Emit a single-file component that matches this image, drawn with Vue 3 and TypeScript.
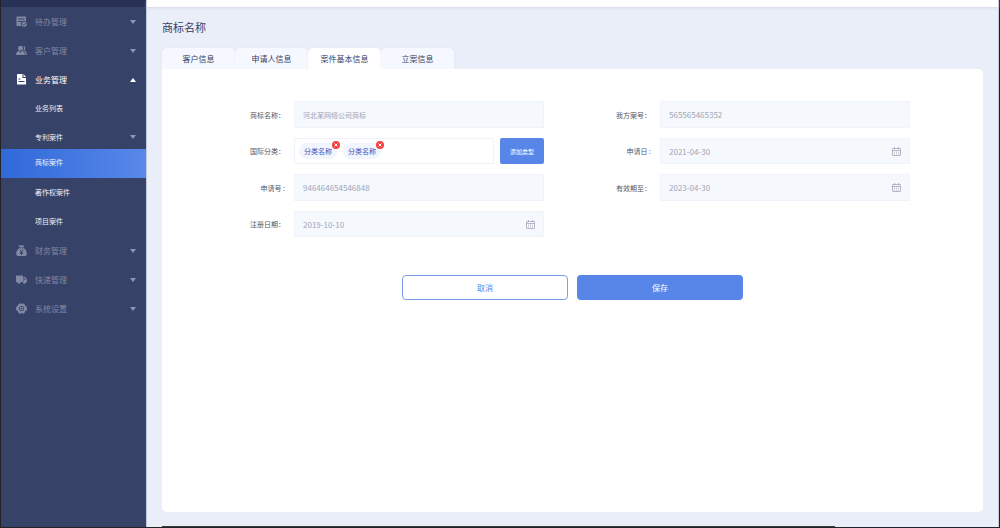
<script setup lang="ts">
import { ref } from 'vue'

interface MenuItem {
  label: string
  icon: string
  open?: boolean
}
interface SubItem {
  label: string
  active?: boolean
  arrow?: boolean
}
interface Field {
  id: string
  label: string
  value: string
  kind: 'text' | 'date' | 'tags'
}

const topMenu: MenuItem[] = [
  { label: '待办管理', icon: 'todo' },
  { label: '客户管理', icon: 'users' },
  { label: '业务管理', icon: 'file', open: true },
]
const subMenu: SubItem[] = [
  { label: '业务列表' },
  { label: '专利案件', arrow: true },
  { label: '商标案件', active: true },
  { label: '著作权案件' },
  { label: '项目案件' },
]
const bottomMenu: MenuItem[] = [
  { label: '财务管理', icon: 'money' },
  { label: '快递管理', icon: 'truck' },
  { label: '系统设置', icon: 'gear' },
]

const tabs = ['客户信息', '申请人信息', '案件基本信息', '立案信息']
const activeTab = ref(2)

const columns = ref<Field[][]>([
  [
    { id: 'name', label: '商标名称：', value: '河北某网络公司商标', kind: 'text' },
    { id: 'category', label: '国际分类：', value: '', kind: 'tags' },
    { id: 'apply-no', label: '申请号 :', value: '946464654546848', kind: 'text' },
    { id: 'reg-date', label: '注册日期：', value: '2019-10-10', kind: 'date' },
  ],
  [
    { id: 'our-no', label: '我方案号：', value: '565565465352', kind: 'text' },
    { id: 'apply-date', label: '申请日 :', value: '2021-04-30', kind: 'date' },
    { id: 'valid-date', label: '有效期至：', value: '2023-04-30', kind: 'date' },
  ],
])

const tags = ref<string[]>(['分类名称', '分类名称'])

function isNumeric(value: string): boolean {
  return /^[\d-]+$/.test(value)
}
</script>

<template>
  <div class="app">
    <aside class="sidebar">
      <div class="sidebar-top"></div>
      <nav>
        <template v-for="(group, g) in [topMenu, bottomMenu]" :key="g">
          <button
            v-for="item in group"
            :key="item.label"
            type="button"
            class="menu-item"
            :class="{ open: item.open }"
          >
            <svg class="menu-icon" viewBox="0 0 22 22" fill="currentColor" aria-hidden="true">
              <template v-if="item.icon === 'todo'">
                <path
                  fill-rule="evenodd"
                  d="M2 1h17a1 1 0 0 1 1 1v9.500a6 6 0 0 0-8.500 8.500H2a1 1 0 0 1-1-1V2a1 1 0 0 1 1-1zM4 5v2h13V5zM4 10v2h7v-2z"
                />
                <path
                  fill-rule="evenodd"
                  d="M16.500 11.500a5 5 0 1 1 0 10 5 5 0 0 1 0-10zM13.500 16.500l2.500 2.500 4-4-1-1-3 3-1.500-1.500z"
                />
              </template>
              <template v-else-if="item.icon === 'users'">
                <circle cx="9" cy="6.500" r="5" />
                <path d="M0 20c0-5 3-8 6-8l3 3 3-3c3 0 6 3 6 8z" />
                <path d="M14 1.500a5 5 0 0 1 2 9.500c3 .5 6 3.500 6 9h-2.500c0-4-2-7-5.500-9a6 6 0 0 0 0-9.500z" />
              </template>
              <path
                v-else-if="item.icon === 'file'"
                fill-rule="evenodd"
                d="M3 0h10v8h7v12a1 1 0 0 1-1 1H3a1 1 0 0 1-1-1V1a1 1 0 0 1 1-1zM15 0l5 6h-5zM5 9v2h4V9zM5 14v2h12v-2z"
              />
              <template v-else-if="item.icon === 'money'">
                <path d="M5 0l3 1.500L11 0l3 1.500L17 0l-2 5H7z" />
                <path
                  fill-rule="evenodd"
                  d="M6 6.500h10c4 3 5.500 7 5.500 11 0 3-1 4.500-4 4.500h-13c-3 0-4-1.500-4-4.500 0-4 1.500-8 5.500-11zM7 9.500l3 4H7.500V15H10v1.500H7.500V18H10v2h2v-2h2.500v-1.500H12V15h2.500v-1.500H12l3-4h-2l-2 3-2-3z"
                />
              </template>
              <template v-else-if="item.icon === 'truck'">
                <path d="M1 3h13v13H0V4a1 1 0 0 1 1-1z" />
                <path fill-rule="evenodd" d="M15 6h4l3 5v5h-7zM16.500 8v3h3.500l-2-3z" />
                <circle cx="6" cy="16.500" r="3" />
                <circle cx="17" cy="16.500" r="3" />
              </template>
              <path
                v-else
                fill-rule="evenodd"
                d="M6 1h3.500L11 2 12.500 1H16l2 3 .5 2.500H21l1 4.500-1 4.500h-2.500L18 18l-2 3h-3.500L11 20l-1.500 1H6l-2-3-.5-2.500H1L0 11l1-4.500h2.500L4 4zM11 6a5 5 0 1 0 0 10 5 5 0 0 0 0-10zM11 7.500a3.500 3.500 0 1 1 0 7 3.500 3.500 0 0 1 0-7zM11 9.500a1.500 1.500 0 1 0 0 3 1.500 1.500 0 0 0 0-3z"
              />
            </svg>
            <span>{{ item.label }}</span>
            <i class="arrow"></i>
          </button>
          <ul v-if="g === 0" class="submenu">
            <li v-for="sub in subMenu" :key="sub.label">
              <a href="#" class="sub-item" :class="{ active: sub.active, parent: sub.arrow }">
                <span>{{ sub.label }}</span>
                <i v-if="sub.arrow" class="arrow"></i>
              </a>
            </li>
          </ul>
        </template>
      </nav>
    </aside>

    <div class="page">
      <header class="topbar"></header>
      <main class="content">
        <h1>商标名称</h1>
        <div class="tabs" role="tablist">
          <button
            v-for="(tab, i) in tabs"
            :key="tab"
            type="button"
            role="tab"
            class="tab"
            :class="{ active: i === activeTab }"
            :aria-selected="i === activeTab"
            @click="activeTab = i"
          >
            {{ tab }}
          </button>
        </div>

        <form class="card" @submit.prevent>
          <div class="form-grid">
            <div v-for="(column, c) in columns" :key="c" class="form-column">
              <div v-for="field in column" :key="field.id" class="field">
                <label :for="field.id">{{ field.label }}</label>
                <div v-if="field.kind === 'tags'" class="tag-row">
                  <div class="tag-box">
                    <span v-for="(tag, t) in tags" :key="t" class="tag">
                      {{ tag }}
                      <button type="button" class="tag-close" aria-label="删除" @click="tags.splice(t, 1)">
                        <svg viewBox="0 0 8 8" aria-hidden="true">
                          <path d="M2.500 2.500l3 3m0-3l-3 3" stroke="#fff" stroke-width="1" />
                        </svg>
                      </button>
                    </span>
                    <input :id="field.id" v-model="field.value" class="tag-input" type="text" />
                  </div>
                  <button type="button" class="add">添加类型</button>
                </div>
                <div v-else class="control">
                  <input
                    :id="field.id"
                    v-model="field.value"
                    type="text"
                    :class="{ numeric: isNumeric(field.value) }"
                  />
                  <svg
                    v-if="field.kind === 'date'"
                    class="calendar"
                    viewBox="0 0 9 9"
                    fill="none"
                    stroke="currentColor"
                    aria-hidden="true"
                  >
                    <rect x="0.500" y="1.500" width="8" height="7" rx="0.500" stroke-width="0.800" />
                    <path d="M0.500 3.500h8" stroke-width="0.800" />
                    <path d="M2.500 0v2M6.500 0v2" stroke-width="0.800" />
                    <path d="M2 5.200h5M2 7h5" stroke-width="0.800" stroke-dasharray="1 1" />
                  </svg>
                </div>
              </div>
            </div>
          </div>
          <div class="actions">
            <button type="button" class="cancel">取消</button>
            <button type="submit" class="save">保存</button>
          </div>
        </form>
        <div class="strip"></div>
      </main>
    </div>
  </div>
</template>

<style>
body {
  margin: 0;
}
</style>

<style scoped>
.app,
.app * {
  box-sizing: border-box;
}

.app {
  display: flex;
  min-height: 100vh;
  border: solid #222327;
  border-width: 0 1px 1px;
  background: #eaeef8;
  font-family: 'Noto Sans CJK SC', 'Noto Sans', sans-serif;
  color: #364267;
}

button,
input {
  margin: 0;
  padding: 0;
  border: 0;
  background: none;
  font-family: inherit;
  color: inherit;
}

button {
  cursor: pointer;
}

.sidebar {
  flex: 0 0 145px;
  background: #364267;
}

.sidebar-top {
  height: 7px;
  background: #283256;
}

.menu-item {
  display: flex;
  align-items: center;
  width: 100%;
  height: 29px;
  padding: 0 10px 0 15px;
  font-size: 8px;
  line-height: 12px;
  color: #8088a4;
}

.menu-icon {
  width: 11px;
  height: 11px;
  margin-right: 8px;
}

.arrow {
  margin-left: auto;
  border: 3px solid transparent;
  border-top: 4px solid #8f97b0;
  border-bottom: 0;
}

.menu-item.open {
  color: #fff;
}

.menu-item.open .arrow {
  border-top: 0;
  border-bottom: 4px solid #fff;
}

.submenu {
  margin: 0;
  padding: 0;
  list-style: none;
}

.sub-item {
  display: flex;
  align-items: center;
  height: 29px;
  padding: 0 10px 1px 34px;
  font-size: 7px;
  line-height: 12px;
  color: #f2f3f7;
  text-decoration: none;
}

.sub-item.parent {
  height: 26px;
  padding-top: 3px;
}

.sub-item.active {
  padding-bottom: 3px;
  background: linear-gradient(90deg, #3069d9, #5888e9);
}

.page {
  display: flex;
  flex: 1;
  flex-direction: column;
  min-width: 0;
  border: solid #c3cadb;
  border-width: 0 1px;
}

.topbar {
  height: 7px;
  background: #fff;
  box-shadow: 0 1px 3px #d3d9ea;
}

.content {
  display: flex;
  flex: 1;
  flex-direction: column;
  padding: 0 15px;
}

h1 {
  margin: 12px 0 13px;
  font-size: 11px;
  font-weight: 400;
  line-height: 16px;
}

.tabs {
  display: flex;
}

.tab {
  width: 73px;
  height: 21px;
  border-radius: 5px 5px 0 0;
  background: #f5f8fe;
  box-shadow: 0 0 2px #dde3f2;
  font-size: 8px;
  line-height: 12px;
}

.tab.active {
  background: #fff;
}

.card {
  position: relative;
  flex: 1;
  margin-bottom: 14px;
  padding: 32px 73px 32px 88px;
  border-radius: 0 5px 5px 5px;
  background: #fff;
}

.form-grid {
  display: grid;
  grid-template-columns: 1fr 1fr;
  gap: 72px;
}

.form-column {
  display: grid;
  grid-template-rows: 27px 26px 27px 26px;
  gap: 10px;
}

.field {
  display: grid;
  grid-template-columns: 35px 1fr;
  gap: 9px;
}

label {
  align-self: center;
  font-size: 7px;
  line-height: 12px;
  color: #55575f;
  text-align: right;
  white-space: nowrap;
}

.control {
  display: flex;
  align-items: center;
  padding-right: 8px;
  border: 1px solid #f0f3fb;
  background: #f5f8fd;
  color: #a2a5b8;
}

.control input {
  flex: 1;
  min-width: 0;
  height: 100%;
  padding: 0 8px;
  font-size: 7px;
}

.control input.numeric {
  font-size: 8px;
}

input:focus {
  outline: none;
}

.calendar {
  width: 9px;
  height: 9px;
}

.tag-row {
  display: flex;
  gap: 6px;
}

.tag-box {
  display: flex;
  flex: 1;
  align-items: center;
  gap: 6px;
  min-width: 0;
  padding: 0 4px;
  border: 1px solid #f0f2fa;
}

.tag {
  position: relative;
  padding: 2px 5px;
  border-radius: 8px;
  background: #f0f5fe;
  font-size: 7px;
  line-height: 12px;
  color: #3c52b8;
  white-space: nowrap;
}

.tag-close {
  position: absolute;
  top: -2px;
  right: -3px;
  width: 8px;
  height: 8px;
  border-radius: 50%;
  background: #f8403f;
}

.tag-close svg {
  display: block;
}

.tag-input {
  flex: 1;
  min-width: 0;
  font-size: 7px;
}

.add {
  width: 44px;
  border-radius: 2px;
  background: #5886e8;
  font-size: 6px;
  color: #fff;
}

.actions {
  display: flex;
  justify-content: center;
  gap: 9px;
  margin: 38px -73px 0 -88px;
}

.actions button {
  width: 166px;
  height: 25px;
  border-radius: 4px;
  font-size: 8px;
}

.actions .cancel {
  border: 1px solid #7b9fec;
  color: #5886e8;
}

.actions .save {
  background: #5886e8;
  color: #fff;
}

.strip {
  width: 82%;
  height: 1px;
  background: #3a3a3c;
}
</style>
